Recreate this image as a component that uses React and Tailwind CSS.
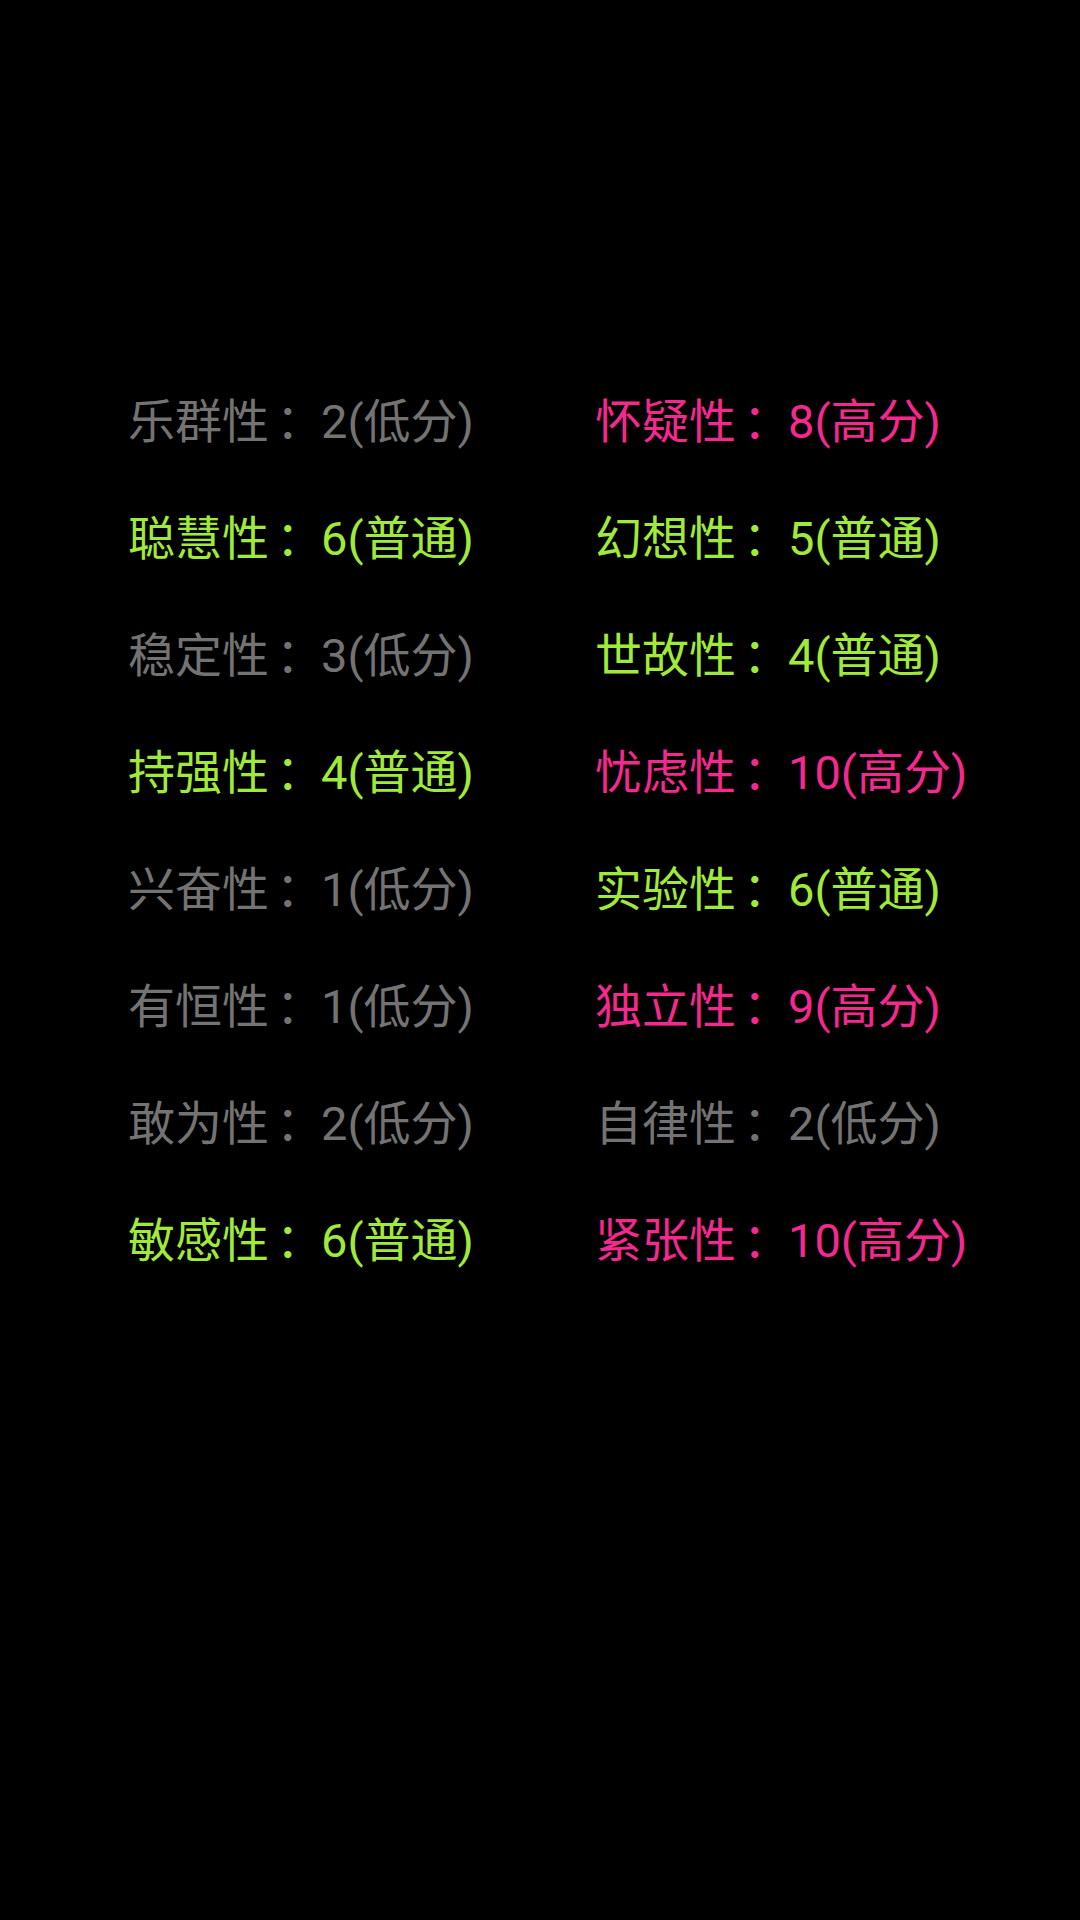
import React from 'react';

const GRAY = 'text-[#737373]';
const GREEN = 'text-[#a0ea3a]';
const PINK = 'text-[#f4288e]';

const rows = [
  [['乐群性', '2(低分)', GRAY], ['怀疑性', '8(高分)', PINK]],
  [['聪慧性', '6(普通)', GREEN], ['幻想性', '5(普通)', GREEN]],
  [['稳定性', '3(低分)', GRAY], ['世故性', '4(普通)', GREEN]],
  [['持强性', '4(普通)', GREEN], ['忧虑性', '10(高分)', PINK]],
  [['兴奋性', '1(低分)', GRAY], ['实验性', '6(普通)', GREEN]],
  [['有恒性', '1(低分)', GRAY], ['独立性', '9(高分)', PINK]],
  [['敢为性', '2(低分)', GRAY], ['自律性', '2(低分)', GRAY]],
  [['敏感性', '6(普通)', GREEN], ['紧张性', '10(高分)', PINK]],
];

const Factor = ({ name, score, color }) => (
  <div className={`h-[117px] leading-[117px] whitespace-nowrap ${color}`}>
    {name}
    <span className="inline-block w-[52px] pl-[7px]">：</span>
    {score}
  </div>
);

export default function App() {
  return (
    <div
      className="min-h-[1920px] w-[1080px] bg-black pt-[363px] pl-[128px] text-[47px]"
      style={{ fontFamily: 'Roboto, "Noto Sans CJK SC", sans-serif' }}
    >
      <div className="grid grid-cols-[467px_auto]">
        {rows.map((row, i) =>
          row.map(([name, score, color], j) => (
            <Factor key={`${i}-${j}`} name={name} score={score} color={color} />
          ))
        )}
      </div>
    </div>
  );
}
